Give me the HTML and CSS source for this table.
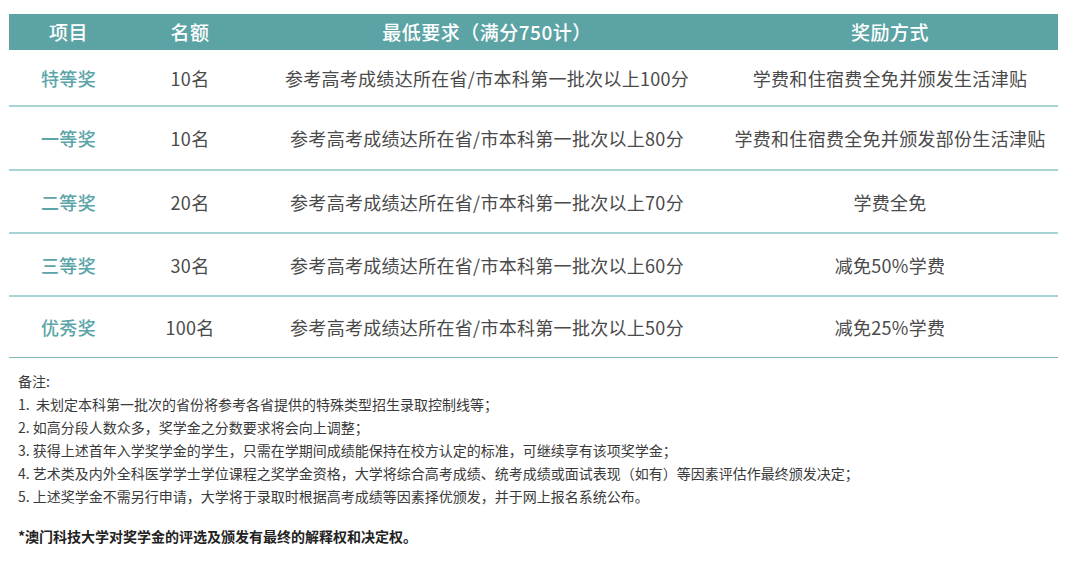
FILE: index.html
```html
<!DOCTYPE html>
<html lang="zh-CN">
<head>
<meta charset="utf-8">
<title>奖学金</title>
<link rel="stylesheet" href="styles.css">
</head>
<body>
<div class="page">
  <table class="awards">
    <colgroup>
      <col class="c1"><col class="c2"><col class="c3"><col class="c4">
    </colgroup>
    <thead>
      <tr><th>项目</th><th>名额</th><th>最低要求（满分750计）</th><th>奖励方式</th></tr>
    </thead>
    <tbody>
      <tr class="first"><td class="name">特等奖</td><td>10名</td><td>参考高考成绩达所在省/市本科第一批次以上100分</td><td>学费和住宿费全免并颁发生活津贴</td></tr>
      <tr class="second"><td class="name">一等奖</td><td>10名</td><td>参考高考成绩达所在省/市本科第一批次以上80分</td><td>学费和住宿费全免并颁发部份生活津贴</td></tr>
      <tr><td class="name">二等奖</td><td>20名</td><td>参考高考成绩达所在省/市本科第一批次以上70分</td><td>学费全免</td></tr>
      <tr><td class="name">三等奖</td><td>30名</td><td>参考高考成绩达所在省/市本科第一批次以上60分</td><td>减免50%学费</td></tr>
      <tr class="last"><td class="name">优秀奖</td><td>100名</td><td>参考高考成绩达所在省/市本科第一批次以上50分</td><td>减免25%学费</td></tr>
    </tbody>
  </table>
  <div class="notes">
    <p>备注:</p>
    <p>1.&nbsp; 未划定本科第一批次的省份将参考各省提供的特殊类型招生录取控制线等；</p>
    <p>2. 如高分段人数众多，奖学金之分数要求将会向上调整；</p>
    <p>3. 获得上述首年入学奖学金的学生，只需在学期间成绩能保持在校方认定的标准，可继续享有该项奖学金；</p>
    <p>4. 艺术类及内外全科医学学士学位课程之奖学金资格，大学将综合高考成绩、统考成绩或面试表现（如有）等因素评估作最终颁发决定；</p>
    <p>5. 上述奖学金不需另行申请，大学将于录取时根据高考成绩等因素择优颁发，并于网上报名系统公布。</p>
    <p class="final">*澳门科技大学对奖学金的评选及颁发有最终的解释权和决定权。</p>
  </div>
</div>
</body>
</html>
```
FILE: styles.css
```css
html, body {
  margin: 0;
  padding: 0;
  background: #ffffff;
}
body {
  font-family: "Noto Sans CJK SC", "Noto Sans", sans-serif;
  color: #444;
}
.page {
  padding: 14px 0 0 9px;
  width: 1049px;
}
.awards {
  width: 1049px;
  border-collapse: collapse;
  table-layout: fixed;
}
.c1 { width: 119px; }
.c2 { width: 124px; }
.c3 { width: 470px; }
.c4 { width: 336px; }
.awards th {
  background: #5ca3a5;
  color: #ffffff;
  font-size: 19px;
  font-weight: 500;
  height: 36px;
  padding: 0;
  line-height: 36px;
  text-align: center;
  letter-spacing: 0.5px;
}
.awards td {
  font-size: 18px;
  font-weight: 400;
  color: #4a4a4a;
  text-align: center;
  height: 61px;
  padding: 0;
  border-bottom: 2px solid #a9d4d6;
  letter-spacing: 0.3px;
}
.awards tr.first td {
  height: 55px;
}
.awards tr.second td {
  height: 62px;
}
.awards tr.last td {
  height: 60px;
  border-bottom: 1px solid #7fb4b6;
}
.awards td.name {
  color: #5ba5a8;
  font-weight: 500;
}
.notes {
  padding: 12px 0 0 9px;
  font-size: 14px;
  color: #3a3a3a;
}
.notes p {
  margin: 0;
  line-height: 23px;
}
.notes p.final {
  margin-top: 17px;
  font-weight: 700;
  color: #222;
}
```
